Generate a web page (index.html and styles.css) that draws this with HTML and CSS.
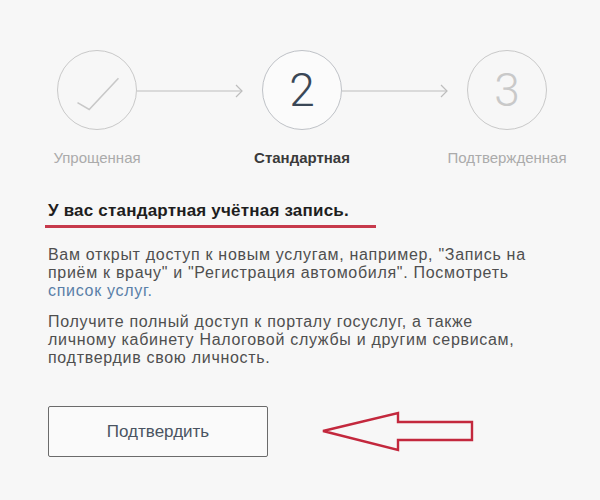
FILE: index.html
```html
<!DOCTYPE html>
<html lang="ru">
<head>
    <meta charset="UTF-8">
    <meta name="viewport" content="width=device-width, initial-scale=1.0">
    <title>Уровень учётной записи</title>
    <link rel="stylesheet" href="styles.css">
</head>
<body>
    <div class="container">
        <div class="steps">
            <div class="step done">
                <div class="circle">
                    <svg width="80" height="80" viewBox="0 0 80 80">
                        <polyline points="20,53 32,60 62,28" fill="none" stroke="#c8c8c8" stroke-width="1.6"/>
                    </svg>
                </div>
                <div class="step-label">Упрощенная</div>
            </div>
            <div class="connector">
                <svg width="106" height="14" viewBox="0 0 106 14">
                    <line x1="0" y1="7" x2="105" y2="7" stroke="#bdbdbd" stroke-width="1.2"/>
                    <polyline points="99,1 105,7 99,13" fill="none" stroke="#bdbdbd" stroke-width="1.2"/>
                </svg>
            </div>
            <div class="step current">
                <div class="circle">2</div>
                <div class="step-label">Стандартная</div>
            </div>
            <div class="connector">
                <svg width="106" height="14" viewBox="0 0 106 14">
                    <line x1="0" y1="7" x2="105" y2="7" stroke="#bdbdbd" stroke-width="1.2"/>
                    <polyline points="99,1 105,7 99,13" fill="none" stroke="#bdbdbd" stroke-width="1.2"/>
                </svg>
            </div>
            <div class="step">
                <div class="circle">3</div>
                <div class="step-label">Подтвержденная</div>
            </div>
        </div>

        <div class="content">
            <h2 class="title">У вас стандартная учётная запись.</h2>
            <p>Вам открыт доступ к новым услугам, например, "Запись на приём к врачу" и "Регистрация автомобиля". Посмотреть <a href="#">список услуг.</a></p>
            <p>Получите полный доступ к порталу госуслуг, а также личному кабинету Налоговой службы и другим сервисам, подтвердив свою личность.</p>

            <div class="actions">
                <button class="confirm-button">Подтвердить</button>
                <svg class="pointer" width="156" height="44" viewBox="0 0 156 44">
                    <polygon points="3,21 78,3 78,12 152,12 152,30 78,30 78,40" fill="none" stroke="#c3283d" stroke-width="2.4" stroke-linejoin="miter"/>
                </svg>
            </div>
        </div>
    </div>
</body>
</html>
```

FILE: styles.css
```css
* {
    box-sizing: border-box;
    margin: 0;
    padding: 0;
}

body {
    font-family: 'Liberation Sans', Arial, sans-serif;
    color: #4f4f4f;
    background-color: #f7f7f7;
}

.container {
    width: 600px;
    height: 500px;
    padding: 50px 0 0 0;
}

.steps {
    display: flex;
    padding-left: 57px;
}

.step {
    width: 80px;
    display: flex;
    flex-direction: column;
    align-items: center;
}

.circle {
    width: 80px;
    height: 80px;
    border: 1px solid #c9c9c9;
    border-radius: 50%;
    display: flex;
    align-items: center;
    justify-content: center;
    font-family: Roboto, 'Liberation Sans', sans-serif;
    font-weight: 300;
    font-size: 46px;
    color: #c9c9c9;
}

.step.current .circle {
    border-color: #bfc2c7;
    background-color: #fbfbfb;
    color: #3a4756;
}

.step-label {
    margin-top: 20px;
    font-size: 15px;
    line-height: 16px;
    white-space: nowrap;
    color: #ababab;
}

.step.current .step-label {
    color: #3a3a3a;
    font-weight: bold;
}

.connector {
    width: 125px;
    padding-top: 34px;
}

.connector svg {
    display: block;
}

.content {
    padding: 36px 0 0 45px;
}

.title {
    display: inline-block;
    width: 331px;
    padding: 0 0 5px 3px;
    border-bottom: 3px solid #c73a4c;
    font-size: 17px;
    line-height: 18px;
    letter-spacing: 0.2px;
    color: #1e1e1e;
}

p {
    width: 490px;
    margin-top: 18px;
    padding-left: 3px;
    font-size: 16px;
    line-height: 18px;
    letter-spacing: 0.7px;
}

p + p {
    margin-top: 13px;
}

a {
    color: #5a7fa8;
    text-decoration: none;
}

.actions {
    display: flex;
    align-items: center;
    gap: 52px;
    margin-top: 39px;
    padding-left: 3px;
}

.confirm-button {
    width: 220px;
    height: 51px;
    border: 1px solid #6b6b6b;
    border-radius: 2px;
    background-color: #fafafa;
    font-family: 'Liberation Sans', Arial, sans-serif;
    font-size: 17px;
    color: #4a5462;
    cursor: pointer;
}

.pointer {
    display: block;
}
```
